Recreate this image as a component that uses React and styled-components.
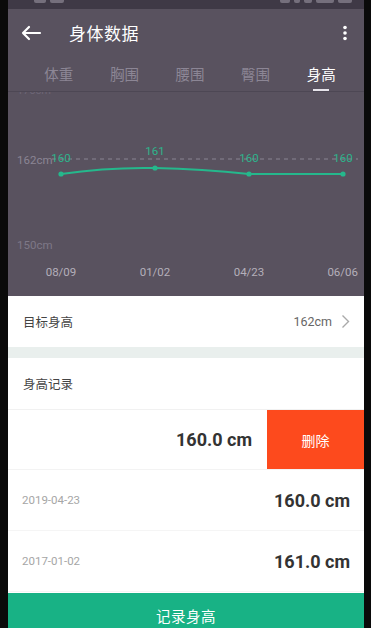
import React from "react";
import styled, { createGlobalStyle } from "styled-components";

const Global = createGlobalStyle`
  html, body { margin: 0; padding: 0; background: #0c0c0c; }
  body { font-family: "Noto Sans CJK SC", "Noto Sans", sans-serif; }
  * { box-sizing: border-box; }
`;

const Frame = styled.div`
  width: 371px;
  height: 628px;
  display: flex;
  background: #0a0a0a;
  padding: 0 7px 0 8px;
  overflow: hidden;
`;

const Screen = styled.div`
  flex: 1;
  display: flex;
  flex-direction: column;
  background: #ffffff;
  overflow: hidden;
`;

const StatusBar = styled.div`
  height: 9px;
  background: #3f3946;
  display: flex;
  align-items: flex-start;
  justify-content: space-between;
  padding: 0 12px 0 26px;
`;

const StatusBlob = styled.div`
  height: 3px;
  width: ${p => p.w}px;
  background: #9a95a0;
  border-radius: 0 0 2px 2px;
  opacity: 0.6;
`;

const StatusGroup = styled.div`
  display: flex;
  gap: 4px;
`;

const Purple = styled.div`
  background: #59525f;
  display: flex;
  flex-direction: column;
`;

const TopBar = styled.div`
  height: 50px;
  display: flex;
  align-items: center;
  padding: 0 16px 3px 12px;
  color: #fff;
`;

const Title = styled.div`
  font-size: 17px;
  margin-left: 27px;
  flex: 1;
  letter-spacing: 0.5px;
`;

const Tabs = styled.div`
  display: grid;
  grid-template-columns: repeat(5, 1fr);
  height: 33px;
  padding: 0 10px 0 18px;
  border-bottom: 1px solid #4d4754;
`;

const Tab = styled.div`
  display: flex;
  flex-direction: column;
  align-items: center;
  font-size: 14.5px;
  color: ${p => (p.active ? "#ffffff" : "#8c8695")};
  padding-top: 4px;
  position: relative;
`;

const Indicator = styled.div`
  position: absolute;
  bottom: 0;
  width: 16px;
  height: 2px;
  background: #e6e3ea;
`;

const Chart = styled.div`
  height: 204px;
  position: relative;
`;

const ChartSvg = styled.svg`
  display: block;
`;

const Section = styled.div`
  display: flex;
  align-items: center;
  height: ${p => p.h}px;
  padding: 0 14px 0 15px;
  background: #fff;
  border-bottom: ${p => (p.line ? "1px solid #f1f1f1" : "none")};
`;

const Label = styled.div`
  font-size: 12.5px;
  color: #444;
  flex: 1;
`;

const Value = styled.div`
  font-size: 12.5px;
  color: #666;
  font-family: "Roboto", "Noto Sans", sans-serif;
  margin-right: 9px;
`;

const Gap = styled.div`
  height: 11px;
  background: #e9efed;
`;

const SwipeRow = styled.div`
  height: 60px;
  display: flex;
  border-bottom: 1px solid #f3f3f3;
`;

const SwipeValue = styled.div`
  flex: 1;
  display: flex;
  align-items: center;
  justify-content: flex-end;
  padding-right: 15px;
  font-family: "Roboto", "Liberation Sans", sans-serif;
  font-weight: bold;
  font-size: 18px;
  color: #333;
`;

const DeleteBtn = styled.div`
  width: 97px;
  background: #fd4a1d;
  color: #fff;
  display: flex;
  align-items: center;
  justify-content: center;
  font-size: 14px;
`;

const RecordRow = styled.div`
  height: 61px;
  display: flex;
  align-items: center;
  padding: 0 14px 0 14px;
  border-bottom: 1px solid #f5f5f5;
`;

const DateText = styled.div`
  flex: 1;
  font-family: "Roboto", "Liberation Sans", sans-serif;
  font-size: 11.5px;
  color: #a6a6a6;
`;

const RecordValue = styled.div`
  font-family: "Roboto", "Liberation Sans", sans-serif;
  font-weight: bold;
  font-size: 18px;
  color: #333;
`;

const BottomButton = styled.div`
  margin-top: auto;
  height: 35px;
  background: #18b285;
  color: #fff;
  display: flex;
  align-items: center;
  justify-content: center;
  font-size: 14.5px;
  padding-top: 9px;
  letter-spacing: 0.5px;
`;

const points = [
  { x: 53, y: 83, label: "160", d: "08/09" },
  { x: 147, y: 77, label: "161", d: "01/02" },
  { x: 241, y: 83, label: "160", d: "04/23" },
  { x: 335, y: 83, label: "160", d: "06/06" },
];

function ChartArea() {
  return (
    <Chart>
      <ChartSvg width="356" height="204" viewBox="0 1 356 204">
        <text x="9" y="3" fontSize="11" fill="#6d6676" fontFamily="Roboto, sans-serif">175cm</text>
        <line x1="44" y1="68" x2="350" y2="68" stroke="#8a8493" strokeWidth="1" strokeDasharray="4 4" />
        <text x="9" y="73" fontSize="11.5" fill="#8b8594" fontFamily="Roboto, sans-serif">162cm</text>
        <text x="9" y="158" fontSize="11.5" fill="#7e7887" fontFamily="Roboto, sans-serif">150cm</text>
        <path
          d="M53 83 Q100 76 147 77 Q194 78 241 83 L335 83"
          fill="none"
          stroke="#25b88c"
          strokeWidth="2"
        />
        {points.map((p, i) => (
          <g key={i}>
            <circle cx={p.x} cy={p.y} r="2.6" fill="#25b88c" />
            <text
              x={p.x}
              y={p.label === "161" ? 64 : 71}
              fontSize="11.5"
              fill="#2db48c"
              textAnchor="middle"
              fontFamily="Roboto, sans-serif"
            >
              {p.label}
            </text>
            <text
              x={i === 3 ? 350 : p.x}
              y="185"
              fontSize="11.5"
              fill="#b4afba"
              textAnchor={i === 3 ? "end" : "middle"}
              fontFamily="Roboto, sans-serif"
            >
              {p.d}
            </text>
          </g>
        ))}
      </ChartSvg>
    </Chart>
  );
}

export default function App() {
  const tabs = ["体重", "胸围", "腰围", "臀围", "身高"];
  return (
    <Frame>
      <Global />
      <Screen>
        <StatusBar>
          <StatusGroup>
            <StatusBlob w={12} />
            <StatusBlob w={14} />
          </StatusGroup>
          <StatusGroup>
            <StatusBlob w={10} />
            <StatusBlob w={6} />
            <StatusBlob w={8} />
            <StatusBlob w={18} />
            <StatusBlob w={14} />
          </StatusGroup>
        </StatusBar>
        <Purple>
          <TopBar>
            <svg width="22" height="16" viewBox="0 0 22 16">
              <path d="M20 8 H3 M9 2 L3 8 L9 14" fill="none" stroke="#fff" strokeWidth="2.2" strokeLinecap="round" strokeLinejoin="round" />
            </svg>
            <Title>身体数据</Title>
            <svg width="6" height="16" viewBox="0 0 6 16">
              <circle cx="3" cy="2.5" r="1.8" fill="#fff" />
              <circle cx="3" cy="8" r="1.8" fill="#fff" />
              <circle cx="3" cy="13.5" r="1.8" fill="#fff" />
            </svg>
          </TopBar>
          <Tabs>
            {tabs.map((t, i) => (
              <Tab key={t} active={i === 4}>
                {t}
                {i === 4 && <Indicator />}
              </Tab>
            ))}
          </Tabs>
          <ChartArea />
        </Purple>
        <Section h={51}>
          <Label>目标身高</Label>
          <Value>162cm</Value>
          <svg width="9" height="15" viewBox="0 0 9 15">
            <path d="M1.5 1.5 L7.5 7.5 L1.5 13.5" fill="none" stroke="#a9a9a9" strokeWidth="1.4" />
          </svg>
        </Section>
        <Gap />
        <Section h={52} line>
          <Label>身高记录</Label>
        </Section>
        <SwipeRow>
          <SwipeValue>160.0 cm</SwipeValue>
          <DeleteBtn>删除</DeleteBtn>
        </SwipeRow>
        <RecordRow>
          <DateText>2019-04-23</DateText>
          <RecordValue>160.0 cm</RecordValue>
        </RecordRow>
        <RecordRow>
          <DateText>2017-01-02</DateText>
          <RecordValue>161.0 cm</RecordValue>
        </RecordRow>
        <BottomButton>记录身高</BottomButton>
      </Screen>
    </Frame>
  );
}
